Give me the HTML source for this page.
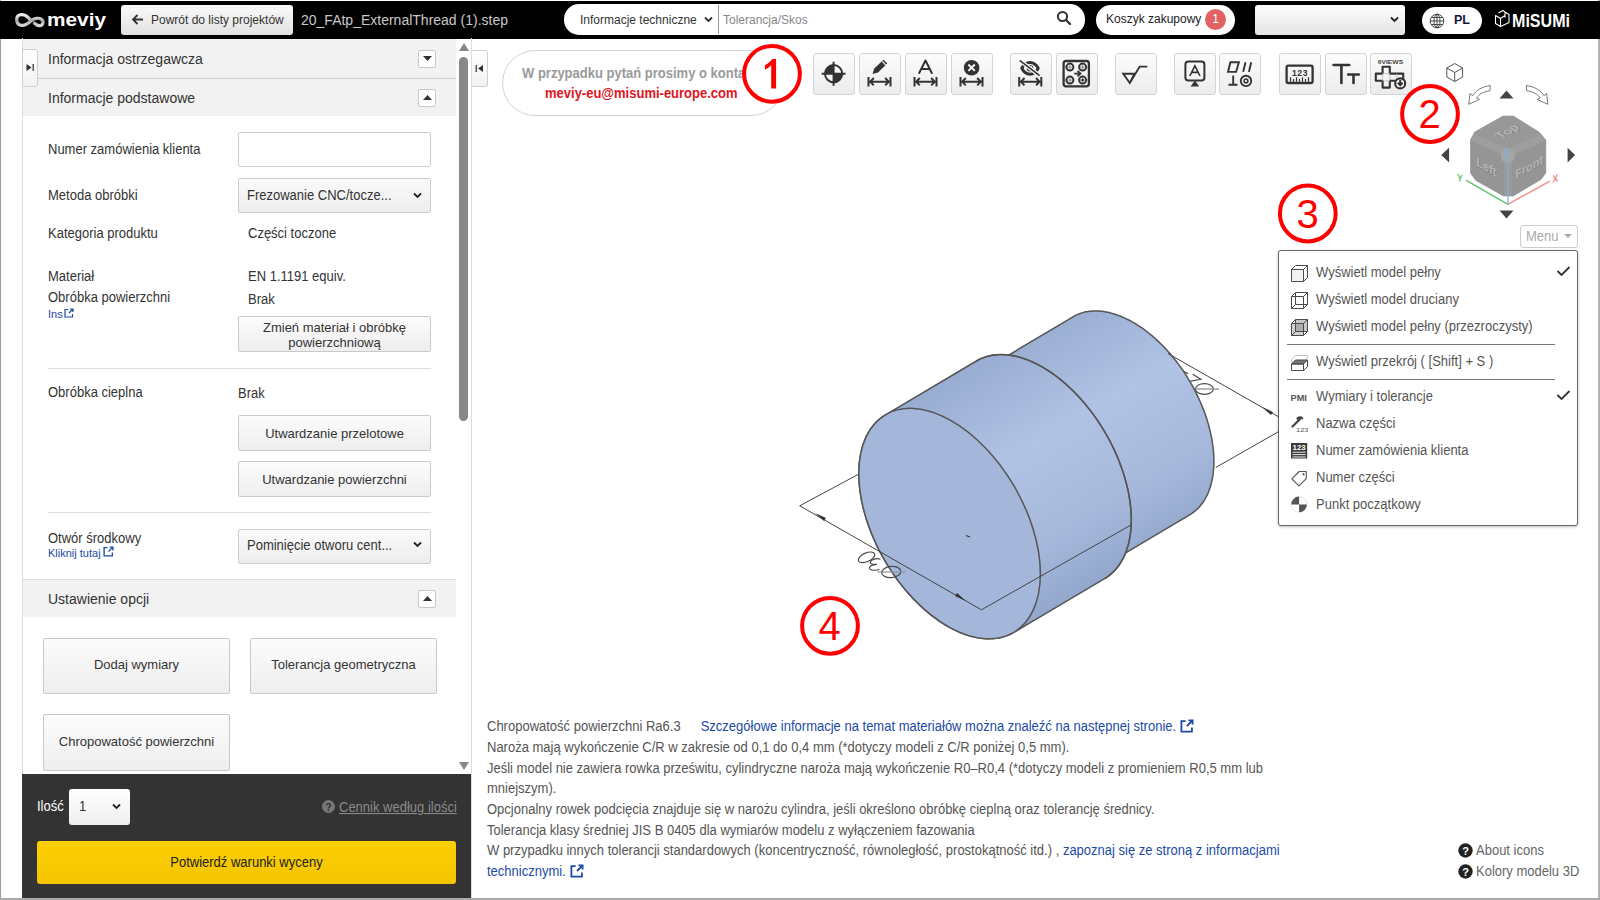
<!DOCTYPE html>
<html><head><meta charset="utf-8">
<style>
*{box-sizing:border-box;margin:0;padding:0}
html,body{width:1600px;height:900px;overflow:hidden;background:#fff;font-family:"Liberation Sans",sans-serif;color:#333}
.a{position:absolute}
.t{position:absolute;white-space:nowrap;translate:0 1px;transform:scaleY(1.07);transform-origin:0 80%}
#frameL{left:0;top:0;width:1px;height:900px;background:#9c9c9c}
#frameR{left:1598px;top:0;width:2px;height:900px;background:linear-gradient(to right,#c4c4c4,#a4a4a4)}
#frameB{left:0;top:898px;width:1600px;height:2px;background:#a9a9a9}
#top{left:0;top:1px;width:1600px;height:37.5px;background:#000}
.btn{position:absolute;border:1px solid #ccc;border-radius:3px;background:linear-gradient(#fff,#e6e6e6)}
.tb{position:absolute;top:53px;width:42px;height:42px;border:1px solid #d4d4d4;border-radius:3px;background:linear-gradient(#fcfcfc,#ececec)}
.tb svg{position:absolute;left:-1px;top:-1px}
.hdr{position:absolute;left:23px;width:433px;background:#f2f2f2}
.sq{position:absolute;width:18px;height:18px;border:1px solid #c8c8c8;border-radius:2px;background:#fff}
.lbl{font-size:13px;color:#333}
.sel{position:absolute;border:1px solid #ccc;border-radius:2px;background:linear-gradient(#fafafa,#ededed)}
.pbtn{position:absolute;padding-top:1px;border:1px solid #c9c9c9;border-radius:2px;background:linear-gradient(#fcfcfc,#eeeeee);font-size:13px;color:#333;text-align:center}
.ann{position:absolute;border:4px solid #e50000;border-radius:50%;width:62px;height:62px;color:#e50000;font-size:40px;text-align:center;line-height:54px;background:rgba(255,255,255,0.0)}
.mi{position:absolute;translate:0 1px;transform:scaleY(1.07);transform-origin:0 80%;left:1316px;font-size:13px;color:#555}
.bt{position:absolute;translate:0 1px;left:487px;font-size:13px;color:#555;line-height:20px;transform:scaleY(1.08);transform-origin:0 14px}
.lnk{color:#1c4aa5}
</style></head><body>
<div id="frameL" class="a"></div>
<div id="frameR" class="a"></div>
<div id="frameB" class="a"></div>

<!-- TOP BAR -->
<div id="top" class="a">
</div>
<!-- meviy logo -->
<svg class="a" style="left:0;top:0" width="120" height="38" viewBox="0 0 120 38">
 <defs><linearGradient id="lg1" x1="0" y1="0" x2="0" y2="1"><stop offset="0" stop-color="#f0f0f0"/><stop offset="0.55" stop-color="#a8a8a8"/><stop offset="1" stop-color="#d8d8d8"/></linearGradient></defs>
 <path d="M31 21 C28 16.5 23.5 14 19.5 15 C15.5 16.2 15.8 23.5 20 25 C24 26.5 27.5 24 31 21 C34 18.3 38.5 17.3 41.5 19.3 C44.3 21.3 43 25.8 39.5 25.6 C37.5 25.5 36 24.5 34.5 23.2" fill="none" stroke="url(#lg1)" stroke-width="3.2" stroke-linecap="round"/>
 <text x="47" y="26.4" font-family="Liberation Sans" font-weight="bold" font-size="19.2" fill="#fff" textLength="59" lengthAdjust="spacingAndGlyphs">meviy</text>
</svg>
<div class="btn" style="left:121px;top:5px;width:172px;height:30px;border:none;background:linear-gradient(#fafafa,#e1e1e1)"></div>
<svg class="a" style="left:131px;top:13px" width="13" height="13" viewBox="0 0 13 13"><path d="M2 6.5 H12 M6.5 2 L2 6.5 L6.5 11" stroke="#333" stroke-width="1.8" fill="none"/></svg>
<div class="t" style="left:151px;top:12px;font-size:12px;line-height:15px;color:#333">Powrót do listy projektów</div>
<div class="t" style="left:301px;top:11px;font-size:14px;line-height:17px;color:#c8c8c8">20_FAtp_ExternalThread (1).step</div>
<!-- search -->
<div class="a" style="left:564px;top:4px;width:521px;height:31px;background:#fff;border-radius:15px"></div>
<div class="t" style="left:580px;top:12px;font-size:12px;line-height:15px;color:#333">Informacje techniczne</div>
<svg class="a" style="left:704px;top:16px" width="9" height="7" viewBox="0 0 9 7"><path d="M1 1.5 L4.5 5 L8 1.5" stroke="#333" stroke-width="1.8" fill="none"/></svg>
<div class="a" style="left:718px;top:5px;width:1px;height:29px;background:#999"></div>
<div class="t" style="left:723px;top:12px;font-size:12px;line-height:15px;color:#888">Tolerancja/Skos</div>
<svg class="a" style="left:1056px;top:10px" width="16" height="16" viewBox="0 0 16 16"><circle cx="6.5" cy="6.5" r="4.6" stroke="#333" stroke-width="2" fill="none"/><path d="M10 10 L14 14" stroke="#333" stroke-width="2.4" stroke-linecap="round"/></svg>
<!-- cart -->
<div class="a" style="left:1096px;top:5px;width:139px;height:30px;background:#fff;border-radius:15px"></div>
<div class="t" style="left:1106px;top:11px;font-size:12px;line-height:15px;color:#222">Koszyk zakupowy</div>
<div class="a" style="left:1205px;top:9px;width:21px;height:21px;border-radius:50%;background:#e06262;color:#fff;font-size:12px;line-height:21px;text-align:center">1</div>
<!-- dropdown -->
<div class="a" style="left:1255px;top:5px;width:150px;height:30px;border-radius:3px;background:linear-gradient(#fdfdfd,#e4e4e4)"></div>
<svg class="a" style="left:1390px;top:16px" width="9" height="7" viewBox="0 0 9 7"><path d="M1 1.5 L4.5 5 L8 1.5" stroke="#222" stroke-width="1.8" fill="none"/></svg>
<!-- PL -->
<div class="a" style="left:1422px;top:7px;width:60px;height:27px;background:#fff;border-radius:14px"></div>
<svg class="a" style="left:1429px;top:13px" width="16" height="16" viewBox="0 0 16 16"><g stroke="#444" stroke-width="1" fill="none"><circle cx="8" cy="8" r="6.8"/><ellipse cx="8" cy="8" rx="3" ry="6.8"/><path d="M1.2 8 H14.8 M2.3 4.5 H13.7 M2.3 11.5 H13.7 M8 1.2 V14.8"/></g></svg>
<div class="t" style="left:1454px;top:12px;font-size:12.5px;font-weight:bold;line-height:15px;color:#12183a">PL</div>
<!-- misumi -->
<svg class="a" style="left:1490px;top:5px" width="90" height="30" viewBox="1490 5 90 30">
 <g stroke="#fff" stroke-width="1.1" fill="none" stroke-linejoin="round"><path d="M1495.5 15.5 L1500.5 18.5 V26.5 L1495.5 23.5 Z M1500.5 18.5 L1505 15.5 M1505 12 L1509 14.5 V22.5 L1500.5 26.5 M1505 12 V17.5 M1498.5 13 L1503 10.5 L1505 12"/></g>
 <text x="1512" y="27" font-family="Liberation Sans" font-weight="bold" font-size="19" fill="#fff" textLength="58" lengthAdjust="spacingAndGlyphs">MiSUMi</text>
</svg>



<!-- LEFT PANEL -->
<div id="left" class="a" style="left:0;top:38px;width:472px;height:860px">
</div>
<div class="a" style="left:22px;top:38px;width:1px;height:737px;background:#dcdcdc"></div>
<div class="a" style="left:471px;top:38px;width:1px;height:860px;background:#dcdcdc"></div>
<!-- headers -->
<div class="hdr" style="top:39px;height:39px"></div>
<div class="a" style="left:23px;top:78px;width:433px;height:1px;background:#cfcfcf"></div>
<div class="hdr" style="top:79px;height:37px"></div>
<div class="t" style="left:48px;top:50px;font-size:14px;line-height:17px;color:#333">Informacja ostrzegawcza</div>
<div class="t" style="left:48px;top:89px;font-size:14px;line-height:17px;color:#333">Informacje podstawowe</div>
<div class="sq" style="left:418px;top:50px"></div>
<svg class="a" style="left:423px;top:56px" width="9" height="5"><path d="M0 0 H9 L4.5 5 Z" fill="#333"/></svg>
<div class="sq" style="left:418px;top:89px"></div>
<svg class="a" style="left:423px;top:95px" width="9" height="5"><path d="M0 5 H9 L4.5 0 Z" fill="#333"/></svg>
<!-- tab -->
<div class="a" style="left:22px;top:49px;width:16px;height:38px;border:1px solid #cfcfcf;border-radius:0 3px 3px 0;background:linear-gradient(#fff,#f2f2f2)"></div>
<svg class="a" style="left:26px;top:63px" width="9" height="9"><path d="M0.5 1 L5.5 4.5 L0.5 8 Z" fill="#333"/><rect x="6.5" y="1" width="1.5" height="7" fill="#555"/></svg>
<!-- form -->
<div class="t lbl" style="left:48px;top:141px;line-height:16px">Numer zamówienia klienta</div>
<div class="a" style="left:238px;top:132px;width:193px;height:35px;border:1px solid #ccc;border-radius:2px;background:#fff"></div>
<div class="t lbl" style="left:48px;top:187px;line-height:16px">Metoda obróbki</div>
<div class="sel" style="left:238px;top:178px;width:193px;height:35px"></div>
<div class="t lbl" style="left:247px;top:187px;line-height:16px">Frezowanie CNC/tocze...</div>
<svg class="a" style="left:413px;top:192px" width="9" height="7" viewBox="0 0 9 7"><path d="M1 1.5 L4.5 5 L8 1.5" stroke="#222" stroke-width="1.8" fill="none"/></svg>
<div class="t lbl" style="left:48px;top:225px;line-height:16px">Kategoria produktu</div>
<div class="t lbl" style="left:248px;top:225px;line-height:16px">Części toczone</div>
<div class="t lbl" style="left:48px;top:268px;line-height:16px">Materiał</div>
<div class="t lbl" style="left:248px;top:268px;line-height:16px">EN 1.1191 equiv.</div>
<div class="t lbl" style="left:48px;top:289px;line-height:16px">Obróbka powierzchni</div>
<div class="t lbl" style="left:248px;top:291px;line-height:16px">Brak</div>
<div class="t" style="left:48px;top:307px;font-size:11px;line-height:13px;color:#1c4aa5">Ins</div>
<svg class="a" style="left:64px;top:308px" width="10" height="10" viewBox="0 0 10 10"><g stroke="#1c4aa5" stroke-width="1.2" fill="none"><path d="M4 1.5 H1 V9 H8.5 V6"/><path d="M5 5 L9 1 M6 1 H9 V4"/></g></svg>
<div class="pbtn" style="left:238px;top:316px;width:193px;height:36px;padding-top:3px;line-height:15px">Zmień materiał i obróbkę<br>powierzchniową</div>
<div class="a" style="left:48px;top:368px;width:383px;height:1px;background:#ddd"></div>
<div class="t lbl" style="left:48px;top:384px;line-height:16px">Obróbka cieplna</div>
<div class="t lbl" style="left:238px;top:385px;line-height:16px">Brak</div>
<div class="pbtn" style="left:238px;top:415px;width:193px;height:36px;line-height:34px">Utwardzanie przelotowe</div>
<div class="pbtn" style="left:238px;top:461px;width:193px;height:36px;line-height:34px">Utwardzanie powierzchni</div>
<div class="a" style="left:48px;top:512px;width:383px;height:1px;background:#ddd"></div>
<div class="t lbl" style="left:48px;top:530px;line-height:16px">Otwór środkowy</div>
<div class="t" style="left:48px;top:546px;font-size:11px;line-height:13px;color:#1c4aa5">Kliknij tutaj</div>
<svg class="a" style="left:103px;top:546px" width="11" height="11" viewBox="0 0 10 10"><g stroke="#1c4aa5" stroke-width="1.2" fill="none"><path d="M4 1.5 H1 V9 H8.5 V6"/><path d="M5 5 L9 1 M6 1 H9 V4"/></g></svg>
<div class="sel" style="left:238px;top:529px;width:193px;height:35px"></div>
<div class="t lbl" style="left:247px;top:537px;line-height:16px">Pominięcie otworu cent...</div>
<svg class="a" style="left:413px;top:541px" width="9" height="7" viewBox="0 0 9 7"><path d="M1 1.5 L4.5 5 L8 1.5" stroke="#222" stroke-width="1.8" fill="none"/></svg>
<div class="a" style="left:23px;top:579px;width:433px;height:1px;background:#dcdcdc"></div>
<div class="hdr" style="top:580px;height:37px"></div>
<div class="t" style="left:48px;top:590px;font-size:14px;line-height:17px;color:#333">Ustawienie opcji</div>
<div class="sq" style="left:418px;top:590px"></div>
<svg class="a" style="left:423px;top:596px" width="9" height="5"><path d="M0 5 H9 L4.5 0 Z" fill="#333"/></svg>
<div class="pbtn" style="left:43px;top:638px;width:187px;height:56px;line-height:52px;padding-top:0">Dodaj wymiary</div>
<div class="pbtn" style="left:250px;top:638px;width:187px;height:56px;line-height:52px;padding-top:0">Tolerancja geometryczna</div>
<div class="pbtn" style="left:43px;top:714px;width:187px;height:57px;line-height:53px;padding-top:0">Chropowatość powierzchni</div>
<!-- scrollbar -->
<svg class="a" style="left:459px;top:43px" width="10" height="8"><path d="M0 8 H10 L5 0 Z" fill="#888"/></svg>
<div class="a" style="left:459px;top:57px;width:9px;height:364px;border-radius:5px;background:#888"></div>
<svg class="a" style="left:459px;top:762px" width="10" height="8"><path d="M0 0 H10 L5 8 Z" fill="#888"/></svg>
<!-- footer -->
<div class="a" style="left:22px;top:774px;width:449px;height:124px;background:#333"></div>
<div class="t" style="left:37px;top:798px;font-size:13px;line-height:16px;color:#fff">Ilość</div>
<div class="a" style="left:69px;top:789px;width:61px;height:36px;border-radius:3px;background:linear-gradient(#fff,#eee)"></div>
<div class="t" style="left:79px;top:798px;font-size:13px;line-height:16px;color:#333">1</div>
<svg class="a" style="left:112px;top:803px" width="9" height="7" viewBox="0 0 9 7"><path d="M1 1.5 L4.5 5 L8 1.5" stroke="#222" stroke-width="1.8" fill="none"/></svg>
<svg class="a" style="left:322px;top:800px" width="13" height="13" viewBox="0 0 13 13"><circle cx="6.5" cy="6.5" r="6.5" fill="#777"/><text x="6.5" y="10.5" font-size="10" font-weight="bold" text-anchor="middle" fill="#333" font-family="Liberation Sans">?</text></svg>
<div class="t" style="left:339px;top:799px;font-size:13px;line-height:16px;color:#8a8a8a;text-decoration:underline">Cennik według ilości</div>
<div class="a" style="left:37px;top:841px;width:419px;height:43px;border-radius:3px;background:linear-gradient(#fccf00,#f3c400)"></div>
<div class="t" style="left:37px;top:854px;width:419px;text-align:center;font-size:13px;line-height:16px;color:#222">Potwierdź warunki wyceny</div>


<!-- VIEWER -->
<div id="viewer" class="a" style="left:472px;top:38px;width:1126px;height:860px">
</div>
<!-- viewer tab -->
<div class="a" style="left:472px;top:50px;width:16px;height:37px;border:1px solid #cfcfcf;border-left:none;border-radius:0 3px 3px 0;background:linear-gradient(#fff,#f2f2f2)"></div>
<svg class="a" style="left:475px;top:64px" width="9" height="9"><rect x="0.5" y="1" width="1.5" height="7" fill="#555"/><path d="M8 1 L3 4.5 L8 8 Z" fill="#333"/></svg>
<!-- contact pill -->
<div class="a" style="left:502px;top:50px;width:282px;height:66px;border:1px solid #d2d2d2;border-radius:33px;background:#fff"></div>
<div class="t" style="left:522px;top:65px;font-size:13px;font-weight:bold;line-height:16px;color:#9a9a9a">W przypadku pytań prosimy o kontakt</div>
<div class="t" style="left:545px;top:84.5px;font-size:13px;font-weight:bold;line-height:16px;color:#e0141e">meviy-eu@misumi-europe.com</div>
<div class="tb" style="left:813px"><svg width="41" height="42" viewBox="0 0 41 42"><g stroke="#333" stroke-width="2" fill="none"><circle cx="20.6" cy="20.7" r="8.6"/><path d="M8.7 20.7 H32.5 M20.6 8.7 V32.8"/></g><path d="M20.6 20.7 H12 A8.6 8.6 0 0 1 20.6 12.1 Z M20.6 20.7 H29.2 A8.6 8.6 0 0 1 20.6 29.3 Z" fill="#333"/></svg></div>
<div class="tb" style="left:859px"><svg width="41" height="42" viewBox="0 0 41 42"><path d="M13.5 21 L15.2 15.5 L24.5 6.8 L28.3 10.6 L19 19.6 Z" fill="#333"/><path d="M23.2 8.4 L26.8 12" stroke="#fafafa" stroke-width="1.2"/><path d="M9.5 24 V33.5 M31.5 24 V33.5 M11 28.7 H30 M14.8 25 L11.2 28.7 L14.8 32.4 M26.2 25 L29.8 28.7 L26.2 32.4" stroke="#333" stroke-width="2" fill="none"/></svg></div>
<div class="tb" style="left:905px"><svg width="41" height="42" viewBox="0 0 41 42"><path d="M14.2 20 L20.5 7.5 L26.8 20 M16.3 16 H24.7" stroke="#333" stroke-width="2" fill="none" stroke-linecap="round" stroke-linejoin="round"/><path d="M9.5 24 V33.5 M31.5 24 V33.5 M11 28.7 H30 M14.8 25 L11.2 28.7 L14.8 32.4 M26.2 25 L29.8 28.7 L26.2 32.4" stroke="#333" stroke-width="2" fill="none"/></svg></div>
<div class="tb" style="left:951px"><svg width="41" height="42" viewBox="0 0 41 42"><circle cx="20.6" cy="14.7" r="7.8" fill="#333"/><path d="M17.4 11.5 L23.8 17.9 M23.8 11.5 L17.4 17.9" stroke="#fff" stroke-width="1.8"/><path d="M9.5 24 V33.5 M31.5 24 V33.5 M11 28.7 H30 M14.8 25 L11.2 28.7 L14.8 32.4 M26.2 25 L29.8 28.7 L26.2 32.4" stroke="#333" stroke-width="2" fill="none"/></svg></div>
<div class="tb" style="left:1010px"><svg width="41" height="42" viewBox="0 0 41 42"><path d="M11.8 15.3 C14 11 17 9.5 20 9.5 C23 9.5 26 11 28.2 15.3 C26 19.6 23 21.2 20 21.2 C17 21.2 14 19.6 11.8 15.3 Z" stroke="#333" stroke-width="3" fill="none" stroke-linejoin="round"/><circle cx="20" cy="15.3" r="3.3" fill="#333"/><circle cx="21.2" cy="14.2" r="1.1" fill="#fafafa"/><path d="M10.3 7.8 L29 22.2" stroke="#fafafa" stroke-width="4"/><path d="M10.3 7.8 L29 22.2" stroke="#333" stroke-width="1.6" stroke-linecap="round"/><path d="M9.2 24 V33.5 M31.3 24 V33.5 M10.7 28.7 H29.8 M14.5 25 L10.9 28.7 L14.5 32.4 M26 25 L29.6 28.7 L26 32.4" stroke="#333" stroke-width="2" fill="none"/></svg></div>
<div class="tb" style="left:1056px"><svg width="41" height="42" viewBox="0 0 41 42"><rect x="7.6" y="8" width="25.3" height="25.3" rx="2.5" stroke="#333" stroke-width="2.3" fill="none"/><g stroke="#333" stroke-width="2" fill="none"><circle cx="13.9" cy="14.1" r="3.5"/><circle cx="26.6" cy="14.1" r="3.5"/><circle cx="13.9" cy="27.1" r="3.5"/><circle cx="26.6" cy="27.1" r="3.5"/></g><g stroke="#555" stroke-width="0.6"><path d="M8.7 14.1 H17.4 M23.1 14.1 H31.8 M13.9 11.5 V16.7 M26.6 11.5 V16.7 M8.7 27.1 H17.5 M13.9 24.5 V29.7 M22.5 27.1 H31.8 M26.6 22.5 V31.7"/></g><circle cx="26.6" cy="27.1" r="1.4" fill="#333"/><path d="M18.2 20.6 H24.3 M21.6 18 L24.4 20.6 L21.6 23.2" stroke="#333" stroke-width="1.9" fill="none"/></svg></div>
<div class="tb" style="left:1115px"><svg width="41" height="42" viewBox="0 0 41 42"><path d="M8.2 20.8 H19.5 L14.8 30 Z M14.8 30 L24.7 13.6 H32.3" stroke="#333" stroke-width="1.9" fill="none" stroke-linejoin="miter"/></svg></div>
<div class="tb" style="left:1174px"><svg width="41" height="42" viewBox="0 0 41 42"><rect x="11.4" y="8.4" width="19" height="19" rx="3" stroke="#333" stroke-width="2" fill="none"/><path d="M15.8 23 L20.9 12.8 L26 23 M17.6 19.4 H24.2" stroke="#333" stroke-width="1.6" fill="none"/><path d="M20.9 27.4 L25.2 33.6 H16.6 Z" fill="#333"/></svg></div>
<div class="tb" style="left:1219px"><svg width="41" height="42" viewBox="0 0 41 42"><g stroke="#333" stroke-width="1.9" fill="none"><path d="M11.4 9.3 H19.9 L17.1 18.9 H9 Z M26.5 9.3 L24.2 18.9 M32.2 9.3 L29.9 18.9 M14.2 22.6 V31.7 M9.5 31.7 H18.5"/><circle cx="27" cy="27.9" r="5.2"/><circle cx="27" cy="27.9" r="1.9" stroke-width="1.5"/></g></svg></div>
<div class="tb" style="left:1279px"><svg width="41" height="42" viewBox="0 0 41 42"><rect x="7.6" y="12.6" width="26" height="17.4" rx="1.8" stroke="#333" stroke-width="2.3" fill="none"/><text x="21" y="22.6" font-family="Liberation Sans" font-weight="bold" font-size="8.6" text-anchor="middle" fill="#333" letter-spacing="0.6">123</text><path d="M11.5 28.8 V24.2 M14.5 28.8 V26 M17.5 28.8 V24.2 M20.5 28.8 V26 M23.5 28.8 V24.2 M26.5 28.8 V26 M29.5 28.8 V24.2" stroke="#333" stroke-width="1.2"/></svg></div>
<div class="tb" style="left:1325px"><svg width="41" height="42" viewBox="0 0 41 42"><path d="M8.6 12 H24.2 M16.4 12 V30 M23.2 21.5 H33.8 M28.5 21.5 V30" stroke="#333" stroke-width="2.6" stroke-linecap="round" fill="none"/></svg></div>
<div class="tb" style="left:1370px"><svg width="41" height="42" viewBox="0 0 41 42"><text x="20.4" y="10.9" font-family="Liberation Sans" font-weight="bold" font-size="6.2" text-anchor="middle" fill="#444" textLength="25.5" lengthAdjust="spacingAndGlyphs">6VIEWS</text><path d="M12.6 13.8 H19.8 V20.6 H33.2 V27.8 H19.8 V34.6 H12.6 V27.8 H5.8 V20.6 H12.6 Z" stroke="#333" stroke-width="2.1" fill="none" stroke-linejoin="round"/><path d="M12.6 20.6 H19.8 V27.8 H12.6 Z M26.5 20.6 V27.8" stroke="#bbb" stroke-width="0.7" fill="none"/><circle cx="30.2" cy="30.4" r="5" fill="#fafafa" stroke="#333" stroke-width="2.1"/><path d="M30.2 27 V31.5 M27.8 29.8 L30.2 32.3 L32.6 29.8" stroke="#333" stroke-width="2" fill="none"/></svg></div>

<!-- nav cube -->
<svg class="a" style="left:1436px;top:56px" width="144" height="170" viewBox="1436 56 144 170">
 <g stroke="#555" stroke-width="1" fill="none" stroke-linejoin="round"><path d="M1454.7 63.5 L1462.6 68 V77 L1454.7 81.5 L1446.8 77 V68 Z M1446.8 68 L1454.7 72.5 L1462.6 68 M1454.7 72.5 V81.5"/></g>
 <g stroke="#6a6a6a" stroke-width="0.9" fill="#fff" stroke-linejoin="round">
  <path d="M1490.3 85.6 L1490 90.8 C1484 91.5 1479 94 1476.5 98 L1479.5 99.4 L1468.7 104.3 L1470 93.6 L1472.8 95.7 C1476 90 1482.5 86.5 1490.3 85.6 Z"/>
  <path d="M1526.3 85.6 L1526.6 90.8 C1532.6 91.5 1537.6 94 1540.1 98 L1537.1 99.4 L1547.9 104.3 L1546.6 93.6 L1543.8 95.7 C1540.6 90 1534.1 86.5 1526.3 85.6 Z"/>
 </g>
 <path d="M1499.5 98.6 H1513.5 L1506.5 90.5 Z M1499.5 210.6 H1513.5 L1506.5 218.4 Z M1449.1 147.8 V162.4 L1441.2 155 Z M1567.6 147.8 V162.4 L1575.1 155 Z" fill="#444"/>
 <path d="M1503.1 116 H1513.2 L1538.8 132 L1545.8 140 V173.1 L1541 179.5 L1513.2 196 H1503.6 L1475.9 180.6 L1470.5 173.1 V140 L1474.8 132 Z" fill="#959595" stroke="#8f8f8f" stroke-width="0.6"/>
 <path d="M1503.1 116 H1513.2 L1538.8 132 L1545.8 140 L1507.9 156 L1470.5 140 L1474.8 132 Z" fill="#989898"/>
 <path d="M1470.5 140 L1474.8 134 L1507.9 149 L1541 134 L1545.8 140 L1507.9 163 Z" fill="#9e9e9e"/>
 <path d="M1470.5 141 L1507.9 157 L1545.8 141 L1545.8 145 L1507.9 163 L1470.5 145 Z" fill="#959595"/>
 <path d="M1504 160 H1511.8 V196 H1504 Z" fill="#9b9b9b"/>
 <path d="M1501.2 151.5 L1507.9 148 L1514.6 151.5 V160 L1507.9 163.5 L1501.2 160 Z" fill="#a6a6a6"/>
 <g font-family="Liberation Sans" font-size="12.5" font-weight="bold" text-anchor="middle">
  <text x="0.6" y="5.3" fill="#767676" transform="matrix(0.866 -0.5 0.866 0.5 1507 131)">Top</text>
  <text x="0" y="4.7" fill="#b6b6b6" transform="matrix(0.866 -0.5 0.866 0.5 1507 131)">Top</text>
  <text x="0.6" y="5.3" fill="#767676" transform="matrix(0.866 0.5 0 1 1486.5 166.5)">Left</text>
  <text x="0" y="4.7" fill="#b6b6b6" transform="matrix(0.866 0.5 0 1 1486.5 166.5)">Left</text>
  <text x="0.6" y="5.3" fill="#767676" transform="matrix(0.866 -0.5 0 1 1529.3 166.5)">Front</text>
  <text x="0" y="4.7" fill="#b6b6b6" transform="matrix(0.866 -0.5 0 1 1529.3 166.5)">Front</text>
 </g>
 <path d="M1507.9 204.4 L1465.9 180.1" stroke="#5cc46a" stroke-width="1.3"/>
 <path d="M1507.9 204.4 L1549.9 181.1" stroke="#f28a8a" stroke-width="1.3"/>
 <path d="M1507.9 204.4 V157" stroke="#7fb1e6" stroke-width="1.3"/>
  <text x="0" y="0" font-family="Liberation Sans" font-size="10.5" font-weight="bold" fill="#5cc46a" transform="matrix(0.8 0.25 0 1 1457 180.8)">Y</text>
 <text x="0" y="0" font-family="Liberation Sans" font-size="10.5" font-weight="bold" fill="#f28080" transform="matrix(0.8 -0.25 0 1 1552.5 183)">X</text>
 <text x="0" y="0" font-family="Liberation Sans" font-size="10.5" font-weight="bold" fill="#7fb1e6" transform="matrix(0.8 -0.25 0 1 1504.3 156.5)">Z</text>
</svg>
<!-- menu button -->
<div class="a" style="left:1520px;top:225px;width:58px;height:23px;border:1px solid #ccc;border-radius:3px;background:#fff"></div>
<div class="t" style="left:1526px;top:228px;font-size:13px;line-height:15px;color:#aaa">Menu</div>
<svg class="a" style="left:1564px;top:234px" width="8" height="5"><path d="M0 0 H8 L4 4 Z" fill="#aaa"/></svg>
<!-- dropdown menu -->
<div class="a" style="left:1278px;top:250px;width:300px;height:276px;border:1px solid #666;border-radius:3px;background:#fff;box-shadow:0 1px 3px rgba(0,0,0,0.25)"></div>
<div class="a" style="left:1287px;top:344px;width:268px;height:1px;background:#777"></div>
<div class="a" style="left:1287px;top:379px;width:268px;height:1px;background:#777"></div>
<div class="mi" style="top:264px;line-height:16px">Wyświetl model pełny</div>
<div class="mi" style="top:291px;line-height:16px">Wyświetl model druciany</div>
<div class="mi" style="top:318px;line-height:16px">Wyświetl model pełny (przezroczysty)</div>
<div class="mi" style="top:353px;line-height:16px">Wyświetl przekrój ( [Shift] + S )</div>
<div class="mi" style="top:388px;line-height:16px">Wymiary i tolerancje</div>
<div class="mi" style="top:415px;line-height:16px">Nazwa części</div>
<div class="mi" style="top:442px;line-height:16px">Numer zamówienia klienta</div>
<div class="mi" style="top:469px;line-height:16px">Numer części</div>
<div class="mi" style="top:496px;line-height:16px">Punkt początkowy</div>
<svg class="a" style="left:1556px;top:265px" width="15" height="12"><path d="M1.5 6 L5.5 10 L13.5 2" stroke="#333" stroke-width="1.8" fill="none"/></svg>
<svg class="a" style="left:1556px;top:389px" width="15" height="12"><path d="M1.5 6 L5.5 10 L13.5 2" stroke="#333" stroke-width="1.8" fill="none"/></svg>
<svg class="a" style="left:1282px;top:256px" width="40" height="264" viewBox="1282 256 40 264">
 <g stroke="#4a4a4a" stroke-width="1" fill="none" stroke-linejoin="round">
  <path d="M1291.5 269.5 H1303.5 V281.5 H1291.5 Z" fill="#f2f2f2"/>
  <path d="M1291.5 269.5 L1295.5 265.5 H1307.5 L1303.5 269.5 M1303.5 281.5 L1307.5 277.5 V265.5"/>
  <path d="M1291.5 296.5 H1303.5 V308.5 H1291.5 Z M1295.5 292.5 H1307.5 V304.5 H1295.5 Z M1291.5 296.5 L1295.5 292.5 M1303.5 296.5 L1307.5 292.5 M1303.5 308.5 L1307.5 304.5 M1291.5 308.5 L1295.5 304.5"/>
  <path d="M1295.5 319.5 H1307.5 V331.5 H1295.5 Z" fill="#c8c8c8" stroke="none"/>
  <path d="M1291.5 323.5 H1303.5 V335.5 H1291.5 Z" fill="rgba(120,120,120,0.35)"/>
  <path d="M1295.5 319.5 H1307.5 V331.5 H1295.5 Z M1291.5 323.5 L1295.5 319.5 M1303.5 323.5 L1307.5 319.5 M1303.5 335.5 L1307.5 331.5 M1291.5 335.5 L1295.5 331.5"/>
 </g>
 <g stroke="#c4c4c4" stroke-width="1" fill="none"><path d="M1291.5 359.5 L1295.5 355.5 H1307.5 V358 L1303.5 362 H1291.5 Z"/></g>
 <g stroke="#4a4a4a" stroke-width="1" fill="none" stroke-linejoin="round"><path d="M1291.5 364 L1295.5 360 H1307.5 L1303.5 364 Z" fill="#777"/><path d="M1291.5 364 H1303.5 V370.5 H1291.5 Z M1303.5 370.5 L1307.5 366.5 V360"/></g>
 <text x="1290.6" y="401.3" font-family="Liberation Sans" font-size="9" font-weight="bold" fill="#555" textLength="16.3" lengthAdjust="spacingAndGlyphs">PMI</text>
 <path d="M1292.5 426.5 L1299.5 419.5" stroke="#444" stroke-width="2.2" stroke-linecap="round"/>
 <path d="M1296.2 418.6 C1297.5 416 1301.5 415.5 1303.5 418 L1302.7 419.6 C1301 418.6 1299.5 419.5 1298.8 421.5 Z" fill="#444"/>
 <text x="1296" y="432.3" font-family="Liberation Sans" font-size="6" fill="#555" textLength="12.4" lengthAdjust="spacingAndGlyphs">123</text>
 <rect x="1291" y="443" width="16.2" height="15.5" fill="#3a3a3a"/>
 <text x="1292.5" y="450" font-family="Liberation Sans" font-size="6.6" font-weight="bold" fill="#fff" textLength="13.2" lengthAdjust="spacingAndGlyphs">123</text>
 <path d="M1292.5 452.2 H1305.7 M1292.5 454.6 H1305.7 M1292.5 457 H1305.7" stroke="#fff" stroke-width="0.9"/>
 <path d="M1291.8 478.8 L1299.2 471.5 H1306.3 V478.6 L1298.9 485.9 Z" stroke="#555" stroke-width="1.1" fill="none" stroke-linejoin="round"/>
 <circle cx="1303.5" cy="474.3" r="1.1" fill="#555"/>
 <circle cx="1299.1" cy="504.4" r="7.8" fill="#fff" stroke="#dcdcdc" stroke-width="0.8"/>
 <path d="M1299.1 504.4 V496.6 A7.8 7.8 0 0 0 1291.3 504.4 Z M1299.1 504.4 H1306.9 A7.8 7.8 0 0 1 1299.1 512.2 Z" fill="#555"/>
</svg>
<!-- 3D model -->
<svg class="a" style="left:472px;top:38px" width="1126" height="700" viewBox="472 38 1126 700">
 <defs>
  <linearGradient id="bodyg" gradientUnits="userSpaceOnUse" x1="884.4" y1="413.4" x2="1014.8" y2="633.8"><stop offset="0" stop-color="#98acd1"/><stop offset="0.4" stop-color="#b0c3e5"/><stop offset="0.75" stop-color="#a6b9dc"/><stop offset="1" stop-color="#93a7cd"/></linearGradient>
 </defs>
 <g stroke="#4a4a4a" stroke-width="1.2" fill="none">
  <path d="M1183 371 L1188 373.6 M1192.8 374.3 L1200.8 379.3 L1189.5 381.3"/>
  <ellipse cx="1204.4" cy="389" rx="9" ry="5.4"/>
 </g>
 <path d="M1194 389 H1219" stroke="#8e8e8e" stroke-width="1.3"/>
 <path d="M957.9 424.1 L957.9 421.7 L958.0 419.3 L958.2 416.9 L958.4 414.5 L958.6 412.2 L958.9 409.9 L959.3 407.7 L959.7 405.5 L960.2 403.4 L960.7 401.3 L961.3 399.2 L962.0 397.2 L962.7 395.3 L963.4 393.3 L964.2 391.5 L965.1 389.7 L966.0 388.0 L966.9 386.3 L968.0 384.6 L969.0 383.1 L970.1 381.5 L971.3 380.1 L972.5 378.7 L973.7 377.4 L975.0 376.1 L976.4 374.9 L977.8 373.8 L979.2 372.7 L980.7 371.7 L982.2 370.8 L1073.0 316.8 L1074.5 315.9 L1076.1 315.1 L1077.7 314.4 L1079.4 313.7 L1081.1 313.1 L1082.8 312.6 L1084.6 312.1 L1086.4 311.8 L1088.2 311.5 L1090.1 311.2 L1092.0 311.1 L1093.9 311.0 L1095.8 310.9 L1097.8 311.0 L1099.8 311.1 L1101.8 311.3 L1103.8 311.6 L1105.9 311.9 L1107.9 312.3 L1110.0 312.8 L1112.1 313.4 L1114.2 314.0 L1116.4 314.7 L1118.5 315.4 L1120.6 316.3 L1122.8 317.2 L1124.9 318.1 L1127.1 319.2 L1129.3 320.2 L1131.4 321.4 L1133.6 322.6 L1135.7 323.9 L1137.9 325.3 L1140.0 326.7 L1142.2 328.2 L1144.3 329.7 L1146.5 331.3 L1148.6 333.0 L1150.7 334.7 L1152.8 336.4 L1154.9 338.3 L1156.9 340.1 L1159.0 342.1 L1161.0 344.0 L1163.0 346.1 L1165.0 348.1 L1167.0 350.3 L1168.9 352.4 L1170.8 354.6 L1172.7 356.9 L1174.6 359.2 L1176.4 361.5 L1178.2 363.9 L1179.9 366.3 L1181.7 368.7 L1183.4 371.2 L1185.0 373.7 L1186.7 376.2 L1188.2 378.8 L1189.8 381.3 L1191.3 383.9 L1192.8 386.6 L1194.2 389.2 L1195.6 391.9 L1196.9 394.6 L1198.2 397.3 L1199.4 400.0 L1200.6 402.7 L1201.8 405.4 L1202.9 408.2 L1204.0 410.9 L1205.0 413.6 L1205.9 416.4 L1206.8 419.1 L1207.7 421.9 L1208.5 424.6 L1209.2 427.3 L1209.9 430.1 L1210.5 432.8 L1211.1 435.5 L1211.7 438.2 L1212.1 440.8 L1212.5 443.5 L1212.9 446.1 L1213.2 448.8 L1213.5 451.3 L1213.7 453.9 L1213.8 456.5 L1213.9 459.0 L1213.9 461.5 L1213.9 463.9 L1213.8 466.3 L1213.6 468.7 L1213.4 471.1 L1213.2 473.4 L1212.9 475.7 L1212.5 477.9 L1212.1 480.1 L1211.6 482.2 L1211.1 484.3 L1210.5 486.4 L1209.8 488.4 L1209.1 490.3 L1208.4 492.3 L1207.6 494.1 L1206.7 495.9 L1205.8 497.6 L1204.9 499.3 L1203.8 501.0 L1202.8 502.5 L1201.7 504.1 L1200.5 505.5 L1199.3 506.9 L1198.1 508.2 L1196.8 509.5 L1195.4 510.7 L1194.0 511.8 L1192.6 512.9 L1191.1 513.9 L1189.6 514.8 L1098.8 568.8 L1097.3 569.7 L1095.7 570.5 L1094.1 571.2 L1092.4 571.9 L1090.7 572.5 L1089.0 573.0 L1087.2 573.5 L1085.4 573.8 L1083.6 574.1 L1081.7 574.4 L1079.8 574.5 L1077.9 574.6 L1076.0 574.7 L1074.0 574.6 L1072.0 574.5 L1070.0 574.3 L1068.0 574.0 L1065.9 573.7 L1063.9 573.3 L1061.8 572.8 L1059.7 572.2 L1057.6 571.6 L1055.4 570.9 L1053.3 570.2 L1051.2 569.3 L1049.0 568.4 L1046.9 567.5 L1044.7 566.4 L1042.5 565.4 L1040.4 564.2 L1038.2 563.0 L1036.1 561.7 L1033.9 560.3 L1031.8 558.9 L1029.6 557.4 L1027.5 555.9 L1025.3 554.3 L1023.2 552.6 L1021.1 550.9 L1019.0 549.2 L1016.9 547.3 L1014.9 545.5 L1012.8 543.5 L1010.8 541.6 L1008.8 539.5 L1006.8 537.5 L1004.8 535.3 L1002.9 533.2 L1001.0 531.0 L999.1 528.7 L997.2 526.4 L995.4 524.1 L993.6 521.7 L991.9 519.3 L990.1 516.9 L988.4 514.4 L986.8 511.9 L985.1 509.4 L983.6 506.8 L982.0 504.3 L980.5 501.7 L979.0 499.0 L977.6 496.4 L976.2 493.7 L974.9 491.0 L973.6 488.3 L972.4 485.6 L971.2 482.9 L970.0 480.2 L968.9 477.4 L967.8 474.7 L966.8 472.0 L965.9 469.2 L965.0 466.5 L964.1 463.7 L963.3 461.0 L962.6 458.3 L961.9 455.5 L961.3 452.8 L960.7 450.1 L960.1 447.4 L959.7 444.8 L959.3 442.1 L958.9 439.5 L958.6 436.8 L958.3 434.3 L958.1 431.7 L958.0 429.1 L957.9 426.6 Z" fill="url(#bodyg)" stroke="#555" stroke-width="1.5"/>
 <path d="M858.8 473.4 L858.9 470.7 L859.0 468.1 L859.1 465.4 L859.3 462.9 L859.6 460.3 L860.0 457.8 L860.4 455.4 L860.8 453.0 L861.4 450.6 L861.9 448.3 L862.6 446.0 L863.3 443.8 L864.1 441.7 L864.9 439.6 L865.8 437.5 L866.7 435.6 L867.7 433.7 L868.8 431.8 L869.9 430.0 L871.0 428.3 L872.3 426.6 L873.5 425.0 L874.9 423.5 L876.2 422.0 L877.7 420.6 L879.1 419.3 L880.7 418.1 L882.2 416.9 L883.8 415.8 L885.5 414.8 L976.4 361.0 L978.1 360.0 L979.8 359.1 L981.6 358.3 L983.5 357.6 L985.3 357.0 L987.2 356.4 L989.2 355.9 L991.2 355.5 L993.2 355.1 L995.2 354.9 L997.3 354.7 L999.4 354.6 L1001.5 354.6 L1003.7 354.6 L1005.9 354.8 L1008.1 355.0 L1010.3 355.3 L1012.6 355.6 L1014.8 356.1 L1017.1 356.6 L1019.4 357.2 L1021.7 357.9 L1024.1 358.7 L1026.4 359.5 L1028.8 360.4 L1031.1 361.4 L1033.5 362.5 L1035.9 363.6 L1038.2 364.8 L1040.6 366.1 L1043.0 367.4 L1045.4 368.8 L1047.7 370.3 L1050.1 371.9 L1052.5 373.5 L1054.8 375.2 L1057.2 377.0 L1059.5 378.8 L1061.8 380.7 L1064.1 382.6 L1066.4 384.6 L1068.7 386.7 L1070.9 388.8 L1073.1 390.9 L1075.4 393.2 L1077.5 395.5 L1079.7 397.8 L1081.8 400.2 L1083.9 402.6 L1086.0 405.1 L1088.0 407.6 L1090.0 410.1 L1092.0 412.7 L1094.0 415.4 L1095.9 418.1 L1097.7 420.8 L1099.5 423.5 L1101.3 426.3 L1103.1 429.1 L1104.8 431.9 L1106.4 434.8 L1108.0 437.7 L1109.6 440.6 L1111.1 443.5 L1112.6 446.5 L1114.0 449.4 L1115.4 452.4 L1116.7 455.4 L1118.0 458.4 L1119.2 461.4 L1120.3 464.4 L1121.4 467.4 L1122.5 470.4 L1123.5 473.5 L1124.4 476.5 L1125.3 479.5 L1126.1 482.5 L1126.9 485.5 L1127.6 488.5 L1128.2 491.4 L1128.8 494.4 L1129.3 497.3 L1129.8 500.2 L1130.2 503.1 L1130.5 506.0 L1130.8 508.9 L1131.0 511.7 L1131.2 514.5 L1131.3 517.2 L1131.3 520.0 L1131.2 522.7 L1131.1 525.3 L1131.0 528.0 L1130.8 530.5 L1130.5 533.1 L1130.1 535.6 L1129.7 538.0 L1129.3 540.4 L1128.7 542.8 L1128.2 545.1 L1127.5 547.4 L1126.8 549.6 L1126.0 551.7 L1125.2 553.8 L1124.3 555.9 L1123.4 557.8 L1122.4 559.7 L1121.3 561.6 L1120.2 563.4 L1119.1 565.1 L1117.8 566.8 L1116.6 568.4 L1115.2 569.9 L1113.9 571.4 L1112.4 572.8 L1111.0 574.1 L1109.4 575.3 L1107.9 576.5 L1106.3 577.6 L1104.6 578.6 L1013.7 632.4 L1012.0 633.4 L1010.3 634.3 L1008.5 635.1 L1006.6 635.8 L1004.8 636.4 L1002.9 637.0 L1000.9 637.5 L998.9 637.9 L996.9 638.3 L994.9 638.5 L992.8 638.7 L990.7 638.8 L988.6 638.8 L986.4 638.8 L984.2 638.6 L982.0 638.4 L979.8 638.1 L977.5 637.8 L975.3 637.3 L973.0 636.8 L970.7 636.2 L968.4 635.5 L966.0 634.7 L963.7 633.9 L961.3 633.0 L959.0 632.0 L956.6 630.9 L954.2 629.8 L951.9 628.6 L949.5 627.3 L947.1 626.0 L944.7 624.6 L942.4 623.1 L940.0 621.5 L937.6 619.9 L935.3 618.2 L932.9 616.4 L930.6 614.6 L928.3 612.7 L926.0 610.8 L923.7 608.8 L921.4 606.7 L919.2 604.6 L917.0 602.5 L914.7 600.2 L912.6 597.9 L910.4 595.6 L908.3 593.2 L906.2 590.8 L904.1 588.3 L902.1 585.8 L900.1 583.3 L898.1 580.7 L896.1 578.0 L894.2 575.3 L892.4 572.6 L890.6 569.9 L888.8 567.1 L887.0 564.3 L885.3 561.5 L883.7 558.6 L882.1 555.7 L880.5 552.8 L879.0 549.9 L877.5 546.9 L876.1 544.0 L874.7 541.0 L873.4 538.0 L872.1 535.0 L870.9 532.0 L869.8 529.0 L868.7 526.0 L867.6 523.0 L866.6 519.9 L865.7 516.9 L864.8 513.9 L864.0 510.9 L863.2 507.9 L862.5 504.9 L861.9 502.0 L861.3 499.0 L860.8 496.1 L860.3 493.2 L859.9 490.3 L859.6 487.4 L859.3 484.5 L859.1 481.7 L858.9 478.9 L858.8 476.2 Z" fill="url(#bodyg)" stroke="#555" stroke-width="1.5"/>
 <ellipse cx="949.6" cy="523.6" rx="126.3" ry="74.6" transform="rotate(59.5 949.6 523.6)" fill="#a4b7da" stroke="#555" stroke-width="1.5"/>
 <path d="M976.3 361.0 L978.4 359.9 L980.5 358.8 L982.7 357.9 L984.9 357.1 L987.2 356.4 L989.6 355.8 L992.0 355.3 L994.5 355.0 L997.0 354.7 L999.5 354.6 L1002.1 354.6 L1004.7 354.7 L1007.4 354.9 L1010.1 355.2 L1012.8 355.7 L1015.6 356.3 L1018.4 356.9 L1021.2 357.7 L1024.0 358.6 L1026.8 359.7 L1029.7 360.8 L1032.6 362.0 L1035.4 363.4 L1038.3 364.8 L1041.2 366.4 L1044.1 368.1 L1046.9 369.8 L1049.8 371.7 L1052.7 373.7 L1055.5 375.7 L1058.4 377.9 L1061.2 380.1 L1064.0 382.5 L1066.7 384.9 L1069.5 387.4 L1072.2 390.0 L1074.9 392.7 L1077.5 395.4 L1080.1 398.3 L1082.7 401.2 L1085.2 404.1 L1087.7 407.2 L1090.2 410.3 L1092.5 413.4 L1094.9 416.7 L1097.2 419.9 L1099.4 423.2 L1101.5 426.6 L1103.6 430.0 L1105.7 433.5 L1107.6 437.0 L1109.6 440.5 L1111.4 444.0 L1113.2 447.6 L1114.8 451.2 L1116.5 454.8 L1118.0 458.5 L1119.5 462.1 L1120.8 465.8 L1122.1 469.4 L1123.4 473.1 L1124.5 476.7 L1125.5 480.4 L1126.5 484.0 L1127.4 487.6 L1128.2 491.2 L1128.9 494.8 L1129.5 498.4 L1130.0 501.9 L1130.4 505.4 L1130.8 508.8 L1131.0 512.3 L1131.2 515.6 L1131.3 519.0 L1131.3 522.3 L1131.1 525.5 L1130.9 528.7 L1130.6 531.8 L1130.3 534.8 L1129.8 537.8 L1129.2 540.7 L1128.6 543.6 L1127.8 546.3 L1127.0 549.0 L1126.1 551.6 L1125.1 554.2 L1124.0 556.6 L1122.8 559.0 L1121.5 561.3 L1120.2 563.4 L1118.8 565.5 L1117.3 567.5 L1115.7 569.4 L1114.0 571.2 L1112.3 572.9 L1110.5 574.4 L1108.7 575.9 L1106.7 577.3 L1104.7 578.6" fill="none" stroke="#555" stroke-width="1.4"/>
 <g stroke="#444" stroke-width="1" fill="none">
  <path d="M799.7 505.8 L981.4 609.8 M799.7 505.8 L859 474 M981.4 609.8 L1131 525"/>
  <path d="M1168 353.5 L1279 417 M1215.7 467.5 L1279 431.4"/>
 </g>
 <path d="M815 513 L826 518 L824 521 Z M966 601 L955 596 L957 593 Z M1262 407 L1273 412 L1271 415 Z" fill="#333"/>
 <path d="M966 535.5 L970 537" stroke="#333" stroke-width="1.2"/>
 <g stroke="#4a4a4a" stroke-width="1.2" fill="none">
  <ellipse cx="866.5" cy="557.3" rx="8.8" ry="4.3" transform="rotate(-24 866.5 557.3)"/>
  <path d="M880.5 559.3 C877 557.8 871 559.5 870.3 562.2 C869.8 564 873 564.8 876.8 564.3 C872.5 564.5 868.3 566.5 869.8 568.8 C871.3 570.8 877 570.5 879.5 569.3"/>
  <ellipse cx="891.3" cy="572" rx="9.6" ry="5.6" transform="rotate(-6 891.3 572)"/>
 </g>
 <path d="M877.5 572 H905.5" stroke="#8e98a8" stroke-width="1.3"/>
</svg>
<!-- annotations -->
<svg class="a" style="left:0;top:0" width="1600" height="900" viewBox="0 0 1600 900" pointer-events="none">
 <circle cx="772" cy="73.8" r="27.9" fill="#fff" stroke="#ff0000" stroke-width="4"/>
 <path d="M776.1 59.1 V88.4 H771.2 V65.2 C769.6 66.8 767.3 68.6 764.9 69.7 V65.3 C767.9 63.8 770.4 61.7 772.4 59.1 Z" fill="#ff0000"/>
 <circle cx="1430" cy="114" r="27.9" fill="none" stroke="#ff0000" stroke-width="4"/>
 <text x="1429.5" y="128.2" font-family="Liberation Sans" font-size="40" fill="#ff0000" text-anchor="middle">2</text>
 <circle cx="1307.8" cy="213.5" r="27.9" fill="none" stroke="#ff0000" stroke-width="4"/>
 <text x="1307.5" y="228" font-family="Liberation Sans" font-size="40" fill="#ff0000" text-anchor="middle">3</text>
 <circle cx="830" cy="625.8" r="27.9" fill="none" stroke="#ff0000" stroke-width="4"/>
 <text x="829.5" y="639.8" font-family="Liberation Sans" font-size="40" fill="#ff0000" text-anchor="middle">4</text>
</svg>
<!-- bottom notes -->
<div class="bt" style="top:716px">Chropowatość powierzchni Ra6.3<span style="display:inline-block;width:20px"></span><span class="lnk">Szczegółowe informacje na temat materiałów można znaleźć na następnej stronie.</span></div>
<div class="bt" style="top:737px">Naroża mają wykończenie C/R w zakresie od 0,1 do 0,4 mm (*dotyczy modeli z C/R poniżej 0,5 mm).</div>
<div class="bt" style="top:758px">Jeśli model nie zawiera rowka prześwitu, cylindryczne naroża mają wykończenie R0–R0,4 (*dotyczy modeli z promieniem R0,5 mm lub</div>
<div class="bt" style="top:778px">mniejszym).</div>
<div class="bt" style="top:799px">Opcjonalny rowek podcięcia znajduje się w narożu cylindra, jeśli określono obróbkę cieplną oraz tolerancję średnicy.</div>
<div class="bt" style="top:820px">Tolerancja klasy średniej JIS B 0405 dla wymiarów modelu z wyłączeniem fazowania</div>
<div class="bt" style="top:840px">W przypadku innych tolerancji standardowych (koncentryczność, równoległość, prostokątność itd.) , <span class="lnk">zapoznaj się ze stroną z informacjami</span></div>
<div class="bt lnk" style="top:861px">technicznymi.</div>
<svg class="a" style="left:1180px;top:719px" width="14" height="14" viewBox="0 0 10 10"><g stroke="#1c4aa5" stroke-width="1.3" fill="none"><path d="M4 1.5 H1 V9 H8.5 V6"/><path d="M5 5 L9 1 M6 1 H9 V4"/></g></svg>
<svg class="a" style="left:570px;top:864px" width="14" height="14" viewBox="0 0 10 10"><g stroke="#1c4aa5" stroke-width="1.3" fill="none"><path d="M4 1.5 H1 V9 H8.5 V6"/><path d="M5 5 L9 1 M6 1 H9 V4"/></g></svg>
<svg class="a" style="left:1458px;top:843px" width="15" height="15" viewBox="0 0 15 15"><circle cx="7.5" cy="7.5" r="7.2" fill="#222"/><text x="7.5" y="11.5" font-family="Liberation Sans" font-size="11" font-weight="bold" text-anchor="middle" fill="#fff">?</text></svg>
<div class="t" style="left:1476px;top:842px;font-size:13px;line-height:16px;color:#666">About icons</div>
<svg class="a" style="left:1458px;top:864px" width="15" height="15" viewBox="0 0 15 15"><circle cx="7.5" cy="7.5" r="7.2" fill="#222"/><text x="7.5" y="11.5" font-family="Liberation Sans" font-size="11" font-weight="bold" text-anchor="middle" fill="#fff">?</text></svg>
<div class="t" style="left:1476px;top:863px;font-size:13px;line-height:16px;color:#666">Kolory modelu 3D</div>


</body></html>
